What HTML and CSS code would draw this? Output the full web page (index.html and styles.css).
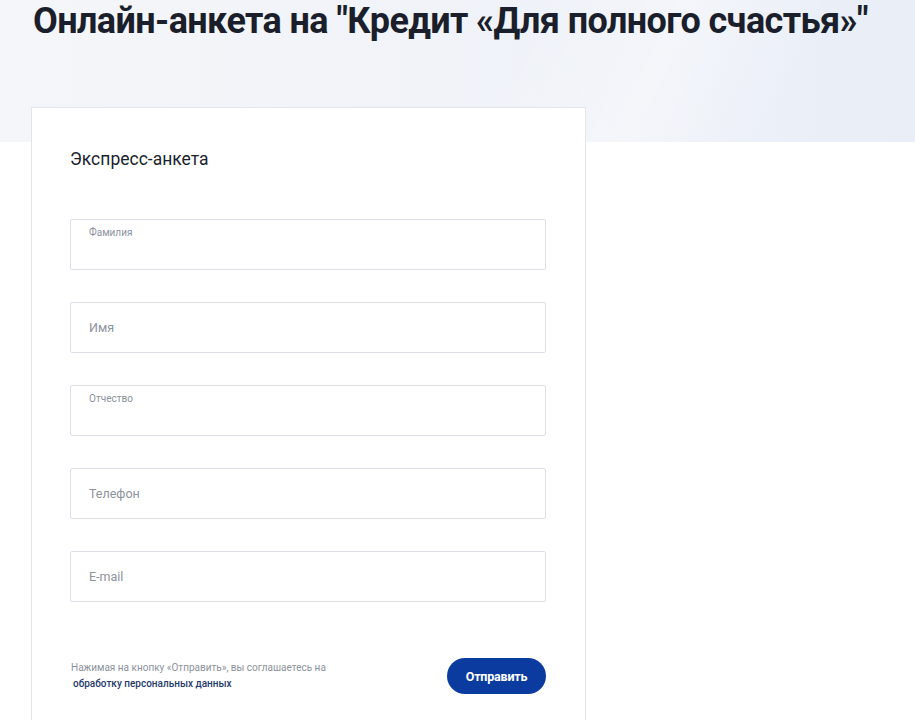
FILE: index.html
```html
<!DOCTYPE html>
<html lang="ru">
<head>
<meta charset="utf-8">
<title>Онлайн-анкета</title>
<link rel="stylesheet" href="styles.css">
</head>
<body>
<div class="page">
  <h1 class="title">Онлайн-анкета на "Кредит «Для полного счастья»"</h1>
  <form class="card">
    <h2 class="card-title">Экспресс-анкета</h2>
    <div class="fields">
      <label class="field field--filled"><span class="field-label">Фамилия</span></label>
      <label class="field"><span class="field-placeholder">Имя</span></label>
      <label class="field field--filled"><span class="field-label">Отчество</span></label>
      <label class="field"><span class="field-placeholder">Телефон</span></label>
      <label class="field"><span class="field-placeholder">E-mail</span></label>
    </div>
    <div class="card-footer">
      <p class="consent">Нажимая на кнопку «Отправить», вы соглашаетесь на<br><a class="consent-link" href="#">обработку персональных данных</a></p>
      <button type="button" class="submit">Отправить</button>
    </div>
  </form>
</div>
</body>
</html>
```

FILE: styles.css
```css
* { box-sizing: border-box; }
html, body { margin: 0; padding: 0; }
body {
  font-family: Roboto, "Liberation Sans", sans-serif;
  color: #1b1e2b;
  background:
    linear-gradient(115deg, rgba(255,255,255,0) 55%, rgba(255,255,255,0.35) 70%, rgba(255,255,255,0) 85%) 0 0 / 100% 142px no-repeat,
    linear-gradient(90deg, #f4f6f9 0%, #eff2f8 60%, #e9eef7 100%) 0 0 / 100% 142px no-repeat,
    #ffffff;
  min-height: 720px;
}
.page { padding: 0 0 0 31px; }
.title {
  margin: 0;
  padding: 0 0 0 2px;
  font-size: 36px;
  line-height: 42px;
  font-weight: 700;
  letter-spacing: -0.6px;
  color: #1b1e2b;
  white-space: nowrap;
}
.card {
  margin-top: 65px;
  width: 555px;
  background: #fff;
  border: 1px solid #e2e5ea;
  padding: 40px 39px 40px 38px;
}
.card-title {
  margin: 0;
  font-size: 17.5px;
  line-height: 22px;
  font-weight: 400;
  color: #1b1e2b;
}
.fields {
  margin-top: 49px;
  display: flex;
  flex-direction: column;
  gap: 32px;
}
.field {
  display: flex;
  align-items: center;
  height: 51px;
  border: 1px solid #dcdfe5;
  border-radius: 2px;
  padding: 0 18px;
}
.field--filled { align-items: flex-start; padding-top: 7px; }
.field-label { font-size: 10px; line-height: 12px; color: #8d929c; }
.field-placeholder { font-size: 12.5px; color: #8d929c; }
.card-footer {
  margin-top: 56px;
  display: flex;
  align-items: center;
  justify-content: space-between;
}
.consent {
  margin: 0;
  padding-left: 1px;
  font-size: 10px;
  line-height: 16px;
  color: #8d929c;
}
.consent-link { color: #1f3a6a; text-decoration: none; font-weight: 500; padding-left: 2px; }
.submit {
  width: 99px;
  height: 36px;
  border: 0;
  border-radius: 18px;
  background: #0b3b9e;
  color: #fff;
  font-family: Roboto, "Liberation Sans", sans-serif;
  font-size: 12.5px;
  font-weight: 700;
  letter-spacing: -0.2px;
  padding: 0;
}
```
